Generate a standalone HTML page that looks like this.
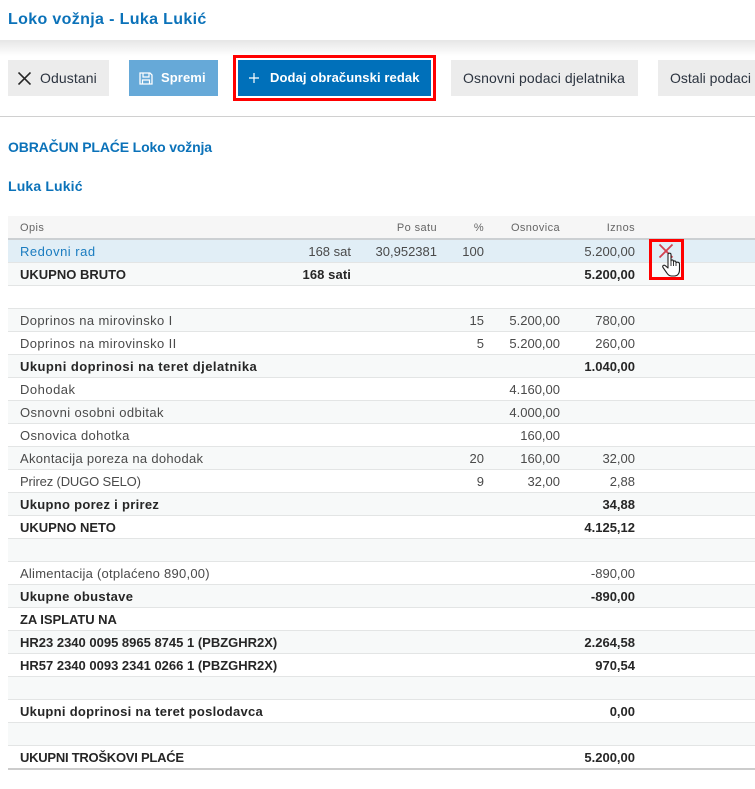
<!DOCTYPE html>
<html lang="hr"><head><meta charset="utf-8"><title>Loko vožnja - Luka Lukić</title>
<style>
html,body{margin:0;padding:0;background:#fff}
body{width:755px;height:789px;position:relative;overflow:hidden;font-family:"Liberation Sans",sans-serif;font-size:13px;color:#4a4a4a}
.abs{position:absolute;white-space:nowrap}
.shadow{position:absolute;left:0;top:40px;width:755px;height:16px;background:linear-gradient(#e6e6e6,#fff)}
h1,h2{margin:0;color:#0b72b9;font-weight:bold;position:absolute;left:8px;white-space:nowrap}
h1{top:9px;font-size:16px;line-height:21px;letter-spacing:.35px}
h2{font-size:14px;line-height:18px}
.btn{position:absolute;top:60px;height:36px;line-height:36px;background:#ececec;color:#2c3440;white-space:nowrap;overflow:hidden;font-size:14px;letter-spacing:.1px}
.btn span{position:absolute;top:0}
.bb{font-size:13px;font-weight:bold;color:#fff;letter-spacing:.1px}
.rule{position:absolute;left:0;top:116px;width:755px;height:1px;background:#d0d0d0}
.t{position:absolute;left:8px;top:216px;width:747px}
.h{height:22px;line-height:22px;background:#f6f6f6;border-bottom:2px solid #ccd0d3;position:relative;font-size:11px;color:#666;letter-spacing:.4px}
.r{height:22px;line-height:22px;border-bottom:1px solid #e3e5e5;position:relative;background:#fff}
.g{background:#f7f9f9}
.b{font-weight:bold;color:#262626}
.r span,.h span{position:absolute;top:1px;white-space:nowrap}
.a{left:12px;letter-spacing:.4px}.s{right:404px}.p{right:318px}.c{right:271px}.o{right:195px}.i{right:120px}
.z{letter-spacing:0!important}
</style></head><body>
<h1>Loko vožnja - Luka Lukić</h1>
<div class="shadow"></div>

<div class="btn" style="left:8px;width:101px"><svg class="abs" style="left:10px;top:12px" width="13" height="13" viewBox="0 0 13 13"><path d="M.5 .5L12.500 12.500M12.500 .5L.5 12.500" stroke="#262626" stroke-width="1.600" fill="none"/></svg><span style="left:32px">Odustani</span></div>
<div class="btn bb" style="left:129px;width:89px;background:#66a9d8"><svg class="abs" style="left:10px;top:12px" width="14" height="13" viewBox="0 0 14 13"><path d="M1 1H11L13 3V12H1Z" fill="none" stroke="#fff" stroke-width="1.300"/><path d="M4 1V5H10V1M3.500 12V8H10.500V12" fill="none" stroke="#fff" stroke-width="1.200"/></svg><span style="left:32px">Spremi</span></div>
<div class="abs" style="left:233px;top:55px;width:197px;height:40px;border:3px solid #f00;background:#fff"></div>
<div class="btn bb" style="left:238px;width:193px;background:#0070ba"><svg class="abs" style="left:10px;top:12px" width="12" height="12" viewBox="0 0 12 12"><path d="M6 1V11M1 6H11" stroke="#fff" stroke-width="1.200" fill="none"/></svg><span style="left:32px">Dodaj obračunski redak</span></div>
<div class="btn" style="left:451px;width:187px"><span style="left:12px">Osnovni podaci djelatnika</span></div>
<div class="btn" style="left:658px;width:97px"><span style="left:12px;letter-spacing:0">Ostali podaci</span></div>
<div class="rule"></div>

<h2 style="top:138px;letter-spacing:-.15px">OBRAČUN PLAĆE Loko vožnja</h2>
<h2 style="top:177px;letter-spacing:.15px">Luka Lukić</h2>

<div class="t">
<div class="h"><span class="a">Opis</span><span class="p">Po satu</span><span class="c">%</span><span class="o">Osnovica</span><span class="i">Iznos</span></div>
<div class="r" style="background:#e1eef6"><span class="a" style="color:#1a7cc0;letter-spacing:.5px">Redovni rad</span><span class="s">168 sat</span><span class="p">30,952381</span><span class="c">100</span><span class="i">5.200,00</span></div>
<div class="r g b"><span class="a z">UKUPNO BRUTO</span><span class="s" style="letter-spacing:.1px">168 sati</span><span class="i">5.200,00</span></div>
<div class="r"></div>
<div class="r g"><span class="a">Doprinos na mirovinsko I</span><span class="c">15</span><span class="o">5.200,00</span><span class="i">780,00</span></div>
<div class="r"><span class="a">Doprinos na mirovinsko II</span><span class="c">5</span><span class="o">5.200,00</span><span class="i">260,00</span></div>
<div class="r g b"><span class="a" style="letter-spacing:.45px">Ukupni doprinosi na teret djelatnika</span><span class="i">1.040,00</span></div>
<div class="r"><span class="a" style="letter-spacing:.5px">Dohodak</span><span class="o">4.160,00</span></div>
<div class="r g"><span class="a">Osnovni osobni odbitak</span><span class="o">4.000,00</span></div>
<div class="r"><span class="a" style="letter-spacing:.35px">Osnovica dohotka</span><span class="o">160,00</span></div>
<div class="r g"><span class="a" style="letter-spacing:.3px">Akontacija poreza na dohodak</span><span class="c">20</span><span class="o">160,00</span><span class="i">32,00</span></div>
<div class="r"><span class="a" style="letter-spacing:-.15px">Prirez (DUGO SELO)</span><span class="c">9</span><span class="o">32,00</span><span class="i">2,88</span></div>
<div class="r g b"><span class="a" style="letter-spacing:.3px">Ukupno porez i prirez</span><span class="i">34,88</span></div>
<div class="r b"><span class="a z">UKUPNO NETO</span><span class="i">4.125,12</span></div>
<div class="r g"></div>
<div class="r"><span class="a" style="letter-spacing:.25px">Alimentacija (otplaćeno 890,00)</span><span class="i">-890,00</span></div>
<div class="r g b"><span class="a" style="letter-spacing:.33px">Ukupne obustave</span><span class="i">-890,00</span></div>
<div class="r b"><span class="a" style="letter-spacing:-.05px">ZA ISPLATU NA</span></div>
<div class="r g b"><span class="a z">HR23 2340 0095 8965 8745 1 (PBZGHR2X)</span><span class="i">2.264,58</span></div>
<div class="r b"><span class="a z">HR57 2340 0093 2341 0266 1 (PBZGHR2X)</span><span class="i">970,54</span></div>
<div class="r g"></div>
<div class="r b"><span class="a" style="letter-spacing:.29px">Ukupni doprinosi na teret poslodavca</span><span class="i">0,00</span></div>
<div class="r g"></div>
<div class="r b" style="border-bottom:2px solid #ccc"><span class="a" style="letter-spacing:-.25px">UKUPNI TROŠKOVI PLAĆE</span><span class="i">5.200,00</span></div>
</div>

<div class="abs" style="left:649px;top:239px;width:29px;height:35px;border:3.500px solid #f00"></div>
<svg class="abs" style="left:658px;top:243px" width="16" height="16" viewBox="0 0 16 16"><path d="M1.500 1.500L14.500 14.500M14.500 1.500L1.500 14.500" stroke="#d2404f" stroke-width="1.800" fill="none"/></svg>
<svg class="abs" style="left:662px;top:252px" width="19" height="25" viewBox="0 0 19 25"><path d="M6 2.500C6 .7 9 .7 9 2.500V9C9 7.500 11.500 7.500 11.500 9.500V10C11.500 8.500 14 8.500 14 10.500V11C14 9.800 17.500 9.800 17.500 12V18C17.500 21.500 15.500 24 12.500 24H9.500C7 24 6 22.500 4.500 20.500L1 15.500C0 13.800 2 12.300 3.500 13.800L6 16Z" fill="#fff" stroke="#222" stroke-width="1.100" stroke-linejoin="round"/><path d="M9 9V14M11.500 10V14M14 11V14" stroke="#222" stroke-width=".9" fill="none"/></svg>
</body></html>
